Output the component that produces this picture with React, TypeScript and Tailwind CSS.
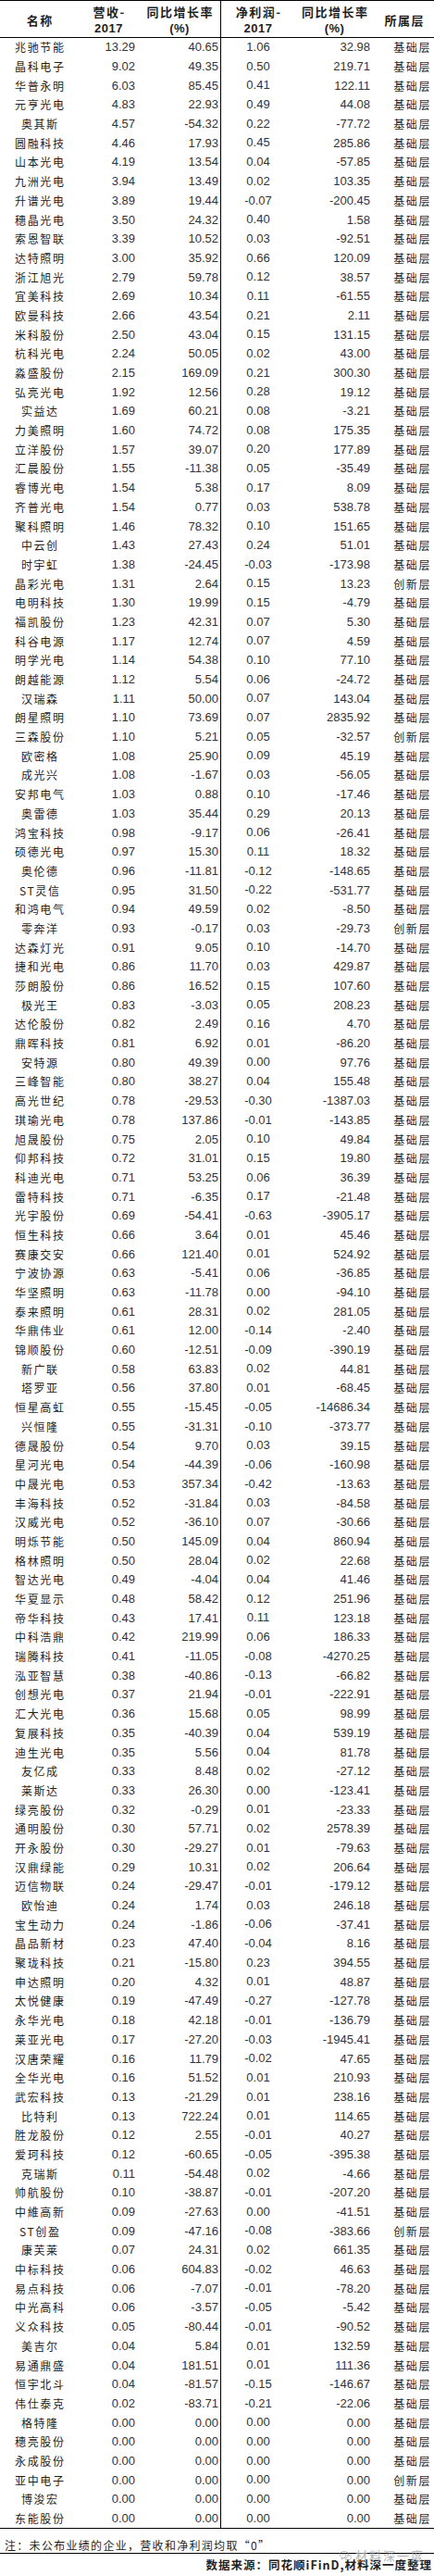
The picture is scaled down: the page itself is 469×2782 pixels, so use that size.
import React from 'react';

type Row = [string, string, string, string, string, string];

const J = '基础层';
const C = '创新层';

const rows: Row[] = [
    ['兆驰节能', '13.29', '40.65', '1.06', '32.98', J],
    ['晶科电子', '9.02', '49.35', '0.50', '219.71', J],
    ['华普永明', '6.03', '85.45', '0.41', '122.11', J],
    ['元亨光电', '4.83', '22.93', '0.49', '44.08', J],
    ['奥其斯', '4.57', '-54.32', '0.22', '-77.72', J],
    ['圆融科技', '4.46', '17.93', '0.45', '285.86', J],
    ['山本光电', '4.19', '13.54', '0.04', '-57.85', J],
    ['九洲光电', '3.94', '13.49', '0.02', '103.35', J],
    ['升谱光电', '3.89', '19.44', '-0.07', '-200.45', J],
    ['穗晶光电', '3.50', '24.32', '0.40', '1.58', J],
    ['索恩智联', '3.39', '10.52', '0.03', '-92.51', J],
    ['达特照明', '3.00', '35.92', '0.66', '120.09', J],
    ['浙江旭光', '2.79', '59.78', '0.12', '38.57', J],
    ['宜美科技', '2.69', '10.34', '0.11', '-61.55', J],
    ['欧曼科技', '2.66', '43.54', '0.21', '2.11', J],
    ['米科股份', '2.50', '43.04', '0.15', '131.15', J],
    ['杭科光电', '2.24', '50.05', '0.02', '43.00', J],
    ['淼盛股份', '2.15', '169.09', '0.21', '300.30', J],
    ['弘亮光电', '1.92', '12.56', '0.28', '19.12', J],
    ['实益达', '1.69', '60.21', '0.08', '-3.21', J],
    ['力美照明', '1.60', '74.72', '0.08', '175.35', J],
    ['立洋股份', '1.57', '39.07', '0.20', '177.89', J],
    ['汇晨股份', '1.55', '-11.38', '0.05', '-35.49', J],
    ['睿博光电', '1.54', '5.38', '0.17', '8.09', J],
    ['齐普光电', '1.54', '0.77', '0.03', '538.78', J],
    ['聚科照明', '1.46', '78.32', '0.10', '151.65', J],
    ['中云创', '1.43', '27.43', '0.24', '51.01', J],
    ['时宇虹', '1.38', '-24.45', '-0.03', '-173.98', J],
    ['晶彩光电', '1.31', '2.64', '0.15', '13.23', C],
    ['电明科技', '1.30', '19.99', '0.15', '-4.79', J],
    ['福凯股份', '1.23', '42.31', '0.07', '5.30', J],
    ['科谷电源', '1.17', '12.74', '0.07', '4.59', J],
    ['明学光电', '1.14', '54.38', '0.10', '77.10', J],
    ['朗越能源', '1.12', '5.54', '0.06', '-24.72', J],
    ['汉瑞森', '1.11', '50.00', '0.07', '143.04', J],
    ['朗星照明', '1.10', '73.69', '0.07', '2835.92', J],
    ['三森股份', '1.10', '5.21', '0.05', '-32.57', C],
    ['欧密格', '1.08', '25.90', '0.09', '45.19', J],
    ['成光兴', '1.08', '-1.67', '0.03', '-56.05', J],
    ['安邦电气', '1.03', '0.88', '0.10', '-17.46', J],
    ['奥雷德', '1.03', '35.44', '0.29', '20.13', J],
    ['鸿宝科技', '0.98', '-9.17', '0.06', '-26.41', J],
    ['硕德光电', '0.97', '15.30', '0.11', '18.32', J],
    ['奥伦德', '0.96', '-11.81', '-0.12', '-148.65', J],
    ['ST灵信', '0.95', '31.50', '-0.22', '-531.77', J],
    ['和鸿电气', '0.94', '49.59', '0.02', '-8.50', J],
    ['零奔洋', '0.93', '-0.17', '0.03', '-29.73', C],
    ['达森灯光', '0.91', '9.05', '0.10', '-14.70', J],
    ['捷和光电', '0.86', '11.70', '0.03', '429.87', J],
    ['莎朗股份', '0.86', '16.52', '0.15', '107.60', J],
    ['极光王', '0.83', '-3.03', '0.05', '208.23', J],
    ['达伦股份', '0.82', '2.49', '0.16', '4.70', J],
    ['鼎晖科技', '0.81', '6.92', '0.01', '-86.20', J],
    ['安特源', '0.80', '49.39', '0.00', '97.76', J],
    ['三峰智能', '0.80', '38.27', '0.04', '155.48', J],
    ['高光世纪', '0.78', '-29.53', '-0.30', '-1387.03', J],
    ['琪瑜光电', '0.78', '137.86', '-0.01', '-143.85', J],
    ['旭晟股份', '0.75', '2.05', '0.10', '49.84', J],
    ['仰邦科技', '0.72', '31.01', '0.15', '19.80', J],
    ['科迪光电', '0.71', '53.25', '0.06', '36.39', J],
    ['雷特科技', '0.71', '-6.35', '0.17', '-21.48', J],
    ['光宇股份', '0.69', '-54.41', '-0.63', '-3905.17', J],
    ['恒生科技', '0.66', '3.64', '0.01', '45.46', J],
    ['赛康交安', '0.66', '121.40', '0.01', '524.92', J],
    ['宁波协源', '0.63', '-5.41', '0.06', '-36.85', J],
    ['华坚照明', '0.63', '-11.78', '0.00', '-94.10', J],
    ['泰来照明', '0.61', '28.31', '0.02', '281.05', J],
    ['华鼎伟业', '0.61', '12.00', '-0.14', '-2.40', J],
    ['锦顺股份', '0.60', '-12.51', '-0.09', '-390.19', J],
    ['新广联', '0.58', '63.83', '0.02', '44.81', J],
    ['塔罗亚', '0.56', '37.80', '0.01', '-68.45', J],
    ['恒星高虹', '0.55', '-15.45', '-0.05', '-14686.34', J],
    ['兴恒隆', '0.55', '-31.31', '-0.10', '-373.77', J],
    ['德晟股份', '0.54', '9.70', '0.03', '39.15', J],
    ['星河光电', '0.54', '-44.39', '-0.06', '-160.98', J],
    ['中晟光电', '0.53', '357.34', '-0.42', '-13.63', J],
    ['丰海科技', '0.52', '-31.84', '0.03', '-84.58', J],
    ['汉威光电', '0.52', '-36.10', '0.07', '-30.66', J],
    ['明烁节能', '0.50', '145.09', '0.04', '860.94', J],
    ['格林照明', '0.50', '28.04', '0.02', '22.68', J],
    ['智达光电', '0.49', '-4.04', '0.04', '41.46', J],
    ['华夏显示', '0.48', '58.42', '0.12', '251.96', J],
    ['帝华科技', '0.43', '17.41', '0.11', '123.18', J],
    ['中科浩鼎', '0.42', '219.99', '0.06', '186.33', J],
    ['瑞腾科技', '0.41', '-11.05', '-0.08', '-4270.25', J],
    ['泓亚智慧', '0.38', '-40.86', '-0.13', '-66.82', J],
    ['创想光电', '0.37', '21.94', '-0.01', '-222.91', J],
    ['汇大光电', '0.36', '15.68', '0.05', '98.99', J],
    ['复展科技', '0.35', '-40.39', '0.04', '539.19', J],
    ['迪生光电', '0.35', '5.56', '0.04', '81.78', J],
    ['友亿成', '0.33', '8.48', '0.02', '-27.12', J],
    ['莱斯达', '0.33', '26.30', '0.00', '-123.41', J],
    ['绿亮股份', '0.32', '-0.29', '0.01', '-23.33', J],
    ['通明股份', '0.30', '57.71', '0.02', '2578.39', J],
    ['开永股份', '0.30', '-29.27', '0.01', '-79.63', J],
    ['汉鼎绿能', '0.29', '10.31', '0.02', '206.64', J],
    ['迈信物联', '0.24', '-29.47', '-0.01', '-179.12', J],
    ['欧怡迪', '0.24', '1.74', '0.03', '246.18', J],
    ['宝生动力', '0.24', '-1.86', '-0.06', '-37.41', J],
    ['晶品新材', '0.23', '47.40', '-0.04', '8.16', J],
    ['聚珑科技', '0.21', '-15.80', '0.23', '394.55', J],
    ['申达照明', '0.20', '4.32', '0.01', '48.87', J],
    ['太悦健康', '0.19', '-47.49', '-0.27', '-127.78', J],
    ['永华光电', '0.18', '42.18', '-0.01', '-136.79', J],
    ['莱亚光电', '0.17', '-27.20', '-0.03', '-1945.41', J],
    ['汉唐荣耀', '0.16', '11.79', '-0.02', '47.65', J],
    ['全华光电', '0.16', '51.52', '0.01', '210.93', J],
    ['武宏科技', '0.13', '-21.29', '0.01', '238.16', J],
    ['比特利', '0.13', '722.24', '0.01', '114.65', J],
    ['胜龙股份', '0.12', '2.55', '-0.01', '40.27', J],
    ['爱珂科技', '0.12', '-60.65', '-0.05', '-395.38', J],
    ['克瑞斯', '0.11', '-54.48', '0.02', '-4.66', J],
    ['帅航股份', '0.10', '-38.87', '-0.01', '-207.20', J],
    ['中維高新', '0.09', '-27.63', '0.00', '-41.51', J],
    ['ST创盈', '0.09', '-47.16', '-0.08', '-383.66', C],
    ['康芙莱', '0.07', '24.31', '0.02', '661.35', J],
    ['中标科技', '0.06', '604.83', '-0.02', '46.63', J],
    ['易点科技', '0.06', '-7.07', '-0.01', '-78.20', J],
    ['中光高科', '0.06', '-3.57', '-0.05', '-5.42', J],
    ['义众科技', '0.05', '-80.44', '-0.01', '-90.52', J],
    ['美吉尔', '0.04', '5.84', '0.01', '132.59', J],
    ['易通鼎盛', '0.04', '181.51', '0.01', '111.36', J],
    ['恒宇北斗', '0.04', '-81.57', '-0.15', '-146.67', J],
    ['伟仕泰克', '0.02', '-83.71', '-0.21', '-22.06', J],
    ['格特隆', '0.00', '0.00', '0.00', '0.00', J],
    ['穗亮股份', '0.00', '0.00', '0.00', '0.00', J],
    ['永成股份', '0.00', '0.00', '0.00', '0.00', J],
    ['亚中电子', '0.00', '0.00', '0.00', '0.00', C],
    ['博浚宏', '0.00', '0.00', '0.00', '0.00', J],
    ['东能股份', '0.00', '0.00', '0.00', '0.00', J],
];

const cjk = "font-['Noto_Sans_CJK_SC',sans-serif]";
const num = "font-['Liberation_Sans',Arial,sans-serif]";
const grid = 'grid grid-cols-[85px_65px_88px_81px_85px_65px]';

const HeadCell: React.FC<{ top: string; bottom?: string; left?: boolean }> = ({ top, bottom, left }) => (
    <div className={`flex flex-col items-center justify-center pt-[3px] leading-[18px] ${left ? 'border-l border-black' : ''}`}>
        <span className={`${cjk} text-[13px] font-bold tracking-[1.5px] pl-[1.5px]`}>{top}</span>
        {bottom && <span className={`${num} text-[13px] font-bold tracking-[0.5px]`}>{bottom}</span>}
    </div>
);

const WeChatMark = () => (
    <svg width="13" height="11" viewBox="0 0 26 22" fill="none" stroke="#9a9a9a" strokeWidth="1.6">
        <ellipse cx="10" cy="8" rx="9" ry="7" />
        <path d="M5 14 l-1 4 l4 -2.5" />
        <ellipse cx="18" cy="14" rx="7" ry="5.5" />
        <circle cx="7" cy="7" r="0.8" fill="#9a9a9a" />
        <circle cx="13" cy="7" r="0.8" fill="#9a9a9a" />
    </svg>
);

export default function App() {
    return (
        <div className="w-[469px] bg-white text-[#1e1e1e]">
            <div className="border-t border-black">
                <div className={`${grid} h-[40px] border-b border-black`}>
                    <HeadCell top="名称" />
                    <HeadCell top="营收-" bottom="2017" />
                    <HeadCell top="同比增长率" bottom="(%)" />
                    <HeadCell top="净利润-" bottom="2017" left />
                    <HeadCell top="同比增长率" bottom="(%)" />
                    <HeadCell top="所属层" />
                </div>

                {rows.map(r => (
                    <div key={r[0]} className={`${grid} h-[20.69px] items-center leading-[20px]`}>
                        <div className={`${cjk} text-[12px] tracking-[1.6px] pl-[1.6px] text-center`}>{r[0]}</div>
                        <div className={`${num} text-[13px] text-[#333] text-right pr-[4px]`}>{r[1]}</div>
                        <div className={`${num} text-[13px] text-[#333] text-right pr-[2px]`}>{r[2]}</div>
                        <div className={`${num} text-[13px] text-[#333] text-center h-full border-l border-black`}>{r[3]}</div>
                        <div className={`${num} text-[13px] text-[#333] text-right pr-[4px]`}>{r[4]}</div>
                        <div className={`${cjk} text-[12px] tracking-[1.6px] text-right pr-[3px]`}>{r[5]}</div>
                    </div>
                ))}
            </div>

            <div className="border-t border-black">
                <div className={`${cjk} h-[27px] pt-[10px] pl-[5px] text-[12px] leading-[16px] tracking-[1.3px] border-b border-black`}>
                    注：未公布业绩的企业，营收和净利润均取“0”
                </div>
                <div className="relative h-[23px] flex items-center justify-end pr-[2px]">
                    <span className={`${cjk} text-[12.5px] font-bold tracking-[1px]`}>
                        数据来源：同花顺iFinD,材料深一度整理
                    </span>
                    <div className="absolute right-[10px] top-[-8px] flex items-center gap-[4px] opacity-80">
                        <WeChatMark />
                        <span className={`${cjk} text-[13px] text-[#a0a0a0] tracking-[2px]`}>材料深一度</span>
                    </div>
                </div>
            </div>
        </div>
    );
}
